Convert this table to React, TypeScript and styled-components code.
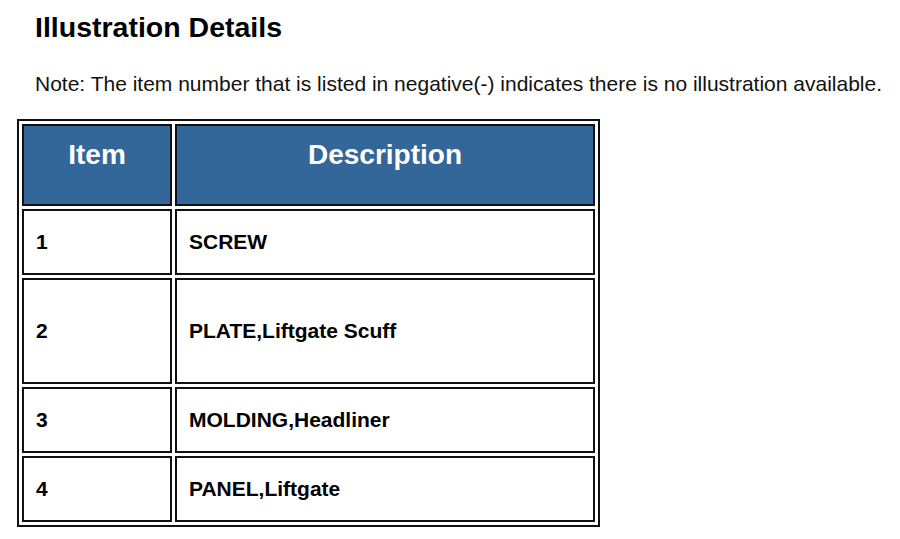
import React from "react";
import styled, { createGlobalStyle } from "styled-components";

const Global = createGlobalStyle`
  html, body { margin: 0; padding: 0; background: #ffffff; }
  body { font-family: "Liberation Sans", Arial, sans-serif; color: #000; }
`;

const Page = styled.div`
  padding: 11px 0 0 17px;
`;

const Title = styled.h1`
  margin: 0 0 0 18px;
  font-size: 28.5px;
  font-weight: bold;
  line-height: 32px;
`;

const Note = styled.p`
  margin: 29px 0 0 18px;
  font-size: 21px;
  line-height: 24px;
  color: #111;
`;

const Table = styled.table`
  margin-top: 23px;
  width: 583px;
  border: 2px solid #111;
  border-spacing: 3px;
  border-collapse: separate;
`;

const HeadCell = styled.th<{ $w?: number }>`
  background: #336699;
  color: #fff;
  border: 2px solid #111;
  font-size: 28px;
  font-weight: bold;
  height: 82px;
  box-sizing: border-box;
  padding: 0 0 20px;
  text-align: center;
  vertical-align: middle;
  width: ${(p) => (p.$w ? `${p.$w}px` : "auto")};
`;

const Cell = styled.td<{ $h: number }>`
  border: 2px solid #111;
  height: ${(p) => p.$h}px;
  box-sizing: border-box;
  padding: 0 0 0 12px;
  font-size: 21px;
  font-weight: bold;
  vertical-align: middle;
`;

const rows = [
  { item: "1", desc: "SCREW", h: 66 },
  { item: "2", desc: "PLATE,Liftgate Scuff", h: 106 },
  { item: "3", desc: "MOLDING,Headliner", h: 66 },
  { item: "4", desc: "PANEL,Liftgate", h: 66 },
];

export default function App() {
  return (
    <Page>
      <Global />
      <Title>Illustration Details</Title>
      <Note>
        Note: The item number that is listed in negative(-) indicates there is no illustration available.
      </Note>
      <Table>
        <thead>
          <tr>
            <HeadCell $w={150}>Item</HeadCell>
            <HeadCell>Description</HeadCell>
          </tr>
        </thead>
        <tbody>
          {rows.map((r) => (
            <tr key={r.item}>
              <Cell $h={r.h}>{r.item}</Cell>
              <Cell $h={r.h}>{r.desc}</Cell>
            </tr>
          ))}
        </tbody>
      </Table>
    </Page>
  );
}
